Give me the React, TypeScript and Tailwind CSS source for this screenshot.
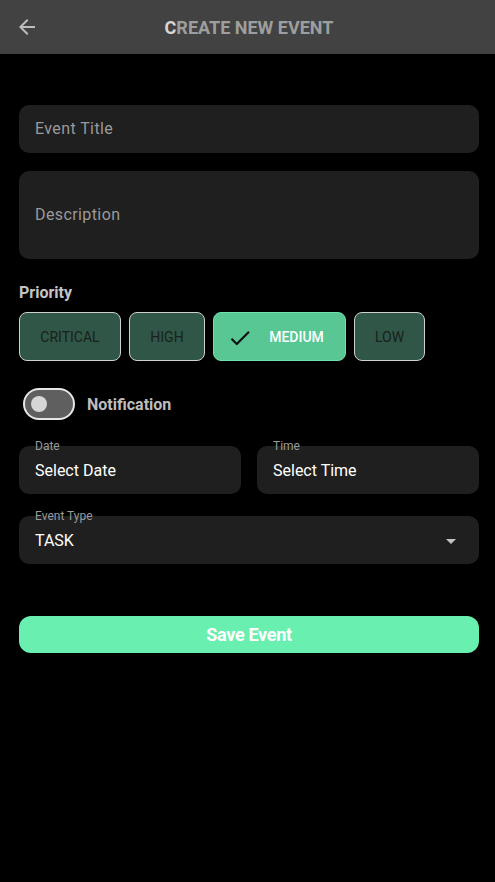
import React, { useState } from 'react';

type Priority = 'CRITICAL' | 'HIGH' | 'MEDIUM' | 'LOW';

const ArrowBackIcon = () => (
  <svg width="24" height="24" viewBox="0 0 24 24" fill="#bdbdbd">
    <path d="M20 11H7.83l5.59-5.59L12 4l-8 8 8 8 1.41-1.41L7.83 13H20v-2z" />
  </svg>
);

const CheckIcon = () => (
  <svg width="26" height="26" viewBox="0 0 24 24" fill="#111">
    <path d="M9 16.17L4.83 12l-1.42 1.41L9 19 21 7l-1.41-1.41z" />
  </svg>
);

const DropIcon = () => (
  <svg width="24" height="24" viewBox="0 0 24 24" fill="#c4c4c4">
    <path d="M7 10l5 5 5-5z" />
  </svg>
);

const priorities: { name: Priority; w: string }[] = [
  { name: 'CRITICAL', w: 'w-[102px]' },
  { name: 'HIGH', w: 'w-[76px]' },
  { name: 'MEDIUM', w: 'w-[133px]' },
  { name: 'LOW', w: 'w-[71px]' },
];

const App: React.FC = () => {
  const [priority, setPriority] = useState<Priority>('MEDIUM');
  const [notify, setNotify] = useState(false);

  return (
    <div className="min-h-[882px] w-full bg-black font-['Roboto',sans-serif]">
      <header className="relative flex h-[54px] items-center bg-[#424242] px-[15px]">
        <button className="relative z-10 flex h-6 w-6 items-center justify-center">
          <ArrowBackIcon />
        </button>
        <h1 className="absolute left-[3px] right-0 text-center text-[18px] font-bold text-[#9e9e9e]">
          <span className="text-[#d6d6d6]">C</span>REATE NEW EVENT
        </h1>
      </header>

      <main className="pl-[19px] pr-4 pt-[51px]">
        <div className="flex h-12 items-center rounded-[10px] bg-[#1f1f1f] px-4">
          <span className="text-[16px] tracking-[0.4px] text-[#9a9a9a]">Event Title</span>
        </div>
        <div className="mt-[18px] flex h-[88px] items-center rounded-[10px] bg-[#1f1f1f] px-4">
          <span className="text-[16px] tracking-[0.4px] text-[#9a9a9a]">Description</span>
        </div>

        <div className="mt-[24px] text-[16px] font-bold leading-5 text-[#c4c4c4]">Priority</div>
        <div className="mt-[9px] flex gap-2">
          {priorities.map(p => {
            const active = p.name === priority;
            return (
              <button
                key={p.name}
                onClick={() => setPriority(p.name)}
                className={`flex h-[49px] items-center justify-center rounded-lg border pt-0.5 text-[14px] ${p.w} ${
                  active
                    ? 'gap-[16px] border-[#6ee3ab] bg-[#58c794] pr-2 font-medium text-white'
                    : 'border-[#d0d0d0] bg-[#2f5646] text-[#1b1f1d]'
                }`}
              >
                {active && <CheckIcon />}
                {p.name}
              </button>
            );
          })}
        </div>

        <div className="mt-[27px] flex items-center pl-1">
          <button
            onClick={() => setNotify(!notify)}
            className="flex h-8 w-[52px] items-center rounded-full border-2 border-[#e6e6e6] bg-[#5f5f5f] px-[6px]"
          >
            <span className="h-4 w-4 rounded-full bg-[#d6d6d6]" />
          </button>
          <span className="ml-3 pt-0.5 text-[16px] font-bold text-[#bdbdbd]">Notification</span>
        </div>

        <div className="mt-[26px] flex gap-4">
          <div className="relative flex h-12 flex-1 items-center rounded-[10px] bg-[#1f1f1f] px-4 pt-0.5">
            <span className="absolute left-4 top-[-9px] text-[12px] text-[#9a9a9a]">Date</span>
            <span className="text-[16px] text-white">Select Date</span>
          </div>
          <div className="relative flex h-12 flex-1 items-center rounded-[10px] bg-[#1f1f1f] px-4 pt-0.5">
            <span className="absolute left-4 top-[-9px] text-[12px] text-[#9a9a9a]">Time</span>
            <span className="text-[16px] text-white">Select Time</span>
          </div>
        </div>

        <div className="relative mt-[22px] flex h-12 items-center justify-between rounded-[10px] bg-[#1f1f1f] pl-4 pr-4 pt-0.5">
          <span className="absolute left-4 top-[-9px] text-[12px] text-[#9a9a9a]">Event Type</span>
          <span className="text-[16px] text-white">TASK</span>
          <DropIcon />
        </div>

        <button className="mt-[52px] flex h-[37px] w-full items-center justify-center rounded-xl bg-[#69f0b0] text-[18px] font-bold tracking-[-0.3px] text-white">
          Save Event
        </button>
      </main>
    </div>
  );
};

export default App;
